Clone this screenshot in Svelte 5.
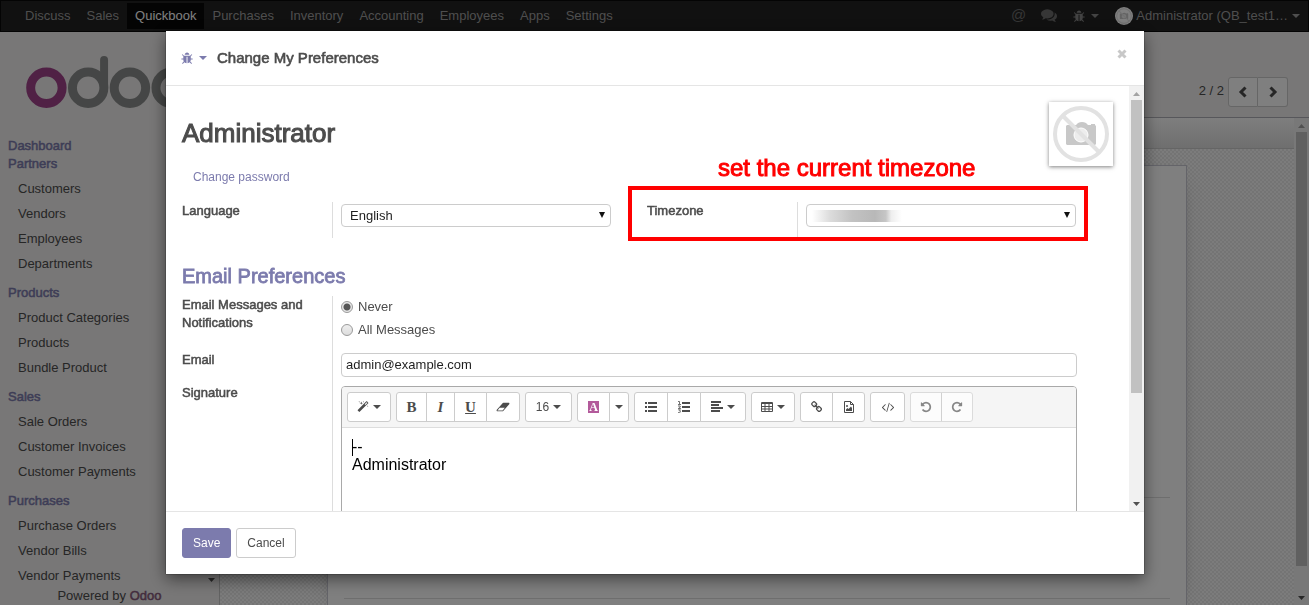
<script>
  const menu = ['Discuss', 'Sales', 'Quickbook', 'Purchases', 'Inventory', 'Accounting', 'Employees', 'Apps', 'Settings'];

  const sections = [
    { title: 'Dashboard', items: [] },
    { title: 'Partners', items: ['Customers', 'Vendors', 'Employees', 'Departments'] },
    { title: 'Products', items: ['Product Categories', 'Products', 'Bundle Product'] },
    { title: 'Sales', items: ['Sale Orders', 'Customer Invoices', 'Customer Payments'] },
    { title: 'Purchases', items: ['Purchase Orders', 'Vendor Bills', 'Vendor Payments'] }
  ];

  const toolbar = [
    [{ name: 'Style', icon: 'magic', caret: true, w: 44 }],
    [
      { name: 'Bold', icon: 'bold', w: 31 },
      { name: 'Italic', icon: 'italic', w: 29 },
      { name: 'Underline', icon: 'underline', w: 33 },
      { name: 'Remove Font Style', icon: 'eraser', w: 34 }
    ],
    [{ name: 'Font Size', icon: 'size', caret: true, w: 47 }],
    [
      { name: 'Recent Color', icon: 'color', w: 33 },
      { name: 'More Color', caret: true, w: 20 }
    ],
    [
      { name: 'Unordered list', icon: 'ul', w: 34 },
      { name: 'Ordered list', icon: 'ol', w: 34 },
      { name: 'Paragraph', icon: 'align', caret: true, w: 46 }
    ],
    [{ name: 'Table', icon: 'table', caret: true, w: 44 }],
    [
      { name: 'Link', icon: 'link', w: 33 },
      { name: 'Picture', icon: 'image', w: 33 }
    ],
    [{ name: 'Code View', icon: 'code', w: 35 }],
    [
      { name: 'Undo', icon: 'undo', w: 32, disabled: true },
      { name: 'Redo', icon: 'redo', w: 32, disabled: true }
    ]
  ];

  let language = $state('English');
  let notify = $state('never');
  let email = $state('admin@example.com');
</script>

{#snippet bug()}
  <svg class="icon" viewBox="0 0 1792 1792" aria-hidden="true"><path d="M1632 960q0 26-19 45t-45 19h-224q0 171-67 290l208 209q19 19 19 45t-19 45q-18 19-45 19t-45-19l-198-197q-5 5-15 13t-42 28.5-65 36.5-82 29-97 13v-896h-128v896q-51 0-101.5-13.5t-87-33-66-39-43.5-32.5l-15-14-183 207q-20 21-48 21-24 0-43-16-19-18-20.5-44.5t15.5-46.5l202-227q-58-114-58-274h-224q-26 0-45-19t-19-45 19-45 45-19h224v-294l-173-173q-19-19-19-45t19-45 45-19 45 19l173 173h844l173-173q19-19 45-19t45 19 19 45-19 45l-173 173v294h224q26 0 45 19t19 45zm-480-576h-640q0-133 93.5-226.5t226.5-93.5 226.5 93.5 93.5 226.5z" /></svg>
{/snippet}

{#snippet nophoto()}
  <svg viewBox="0 0 64 64" aria-hidden="true">
    <path fill="#c8c8c8" d="M17 24l1-1h9l2-2q4-2 8 0l2 2h3v-1h4v1l1 1v18l-1 1H18l-1-1z" />
    <circle cx="32" cy="33" r="7" fill="#ededed" stroke="#fff" />
    <circle cx="32" cy="32" r="26" fill="none" stroke="#e2e2e2" stroke-width="4" />
    <path d="M14 14L50 50" stroke="#e2e2e2" stroke-width="4" />
  </svg>
{/snippet}

{#snippet glyph(name)}
  {#if name === 'magic'}
    <svg class="icon" viewBox="0 0 1792 1792"><path d="M1254 581l293-293-107-107-293 293zm447-293q0 27-18 45l-1286 1286q-18 18-45 18t-45-18l-198-198q-18-18-18-45t18-45l1286-1286q18-18 45-18t45 18l198 198q18 18 18 45zm-1351-190l98 30-98 30-30 98-30-98-98-30 98-30 30-98zm350 162l196 60-196 60-60 196-60-196-196-60 196-60 60-196zm930 478l98 30-98 30-30 98-30-98-98-30 98-30 30-98zm-640-640l98 30-98 30-30 98-30-98-98-30 98-30 30-98z" /></svg>
  {:else if name === 'bold'}
    <b class="letter">B</b>
  {:else if name === 'italic'}
    <i class="letter">I</i>
  {:else if name === 'underline'}
    <u class="letter">U</u>
  {:else if name === 'eraser'}
    <svg class="icon wide" viewBox="0 0 2048 1792"><path d="M960 1408l336-384h-768l-336 384h768zm1013-1077q15 34 9.5 71.5t-30.5 65.5l-896 1024q-38 44-96 44h-768q-38 0-69.5-20.5t-47.5-54.5q-15-34-9.5-71.5t30.5-65.5l896-1024q38-44 96-44h768q38 0 69.5 20.5t47.5 54.5z" /></svg>
  {:else if name === 'size'}
    <span>16</span>
  {:else if name === 'color'}
    <span class="swatch">A</span>
  {:else if name === 'ul'}
    <svg class="icon" viewBox="0 0 12 12"><path d="M0 1h2v2H0zM3 1h9v2H3zM0 5h2v2H0zM3 5h9v2H3zM0 9h2v2H0zM3 9h9v2H3z" /></svg>
  {:else if name === 'ol'}
    <svg class="icon" viewBox="0 0 12 12"><path d="M4 1h8v2H4zM4 5h8v2H4zM4 9h8v2H4z" /><path d="M0 .5h1.5V3M0 3.5h3M0 5h2.2v1.2L.3 7.5h2.6M.2 8.8h2.3L1.5 10q1.3.2.8 1.2-.8.8-2.2.2" fill="none" stroke="currentColor" stroke-width=".8" /></svg>
  {:else if name === 'align'}
    <svg class="icon" viewBox="0 0 12 12"><path d="M0 0h10v2H0zM0 3h8v2H0zM0 6h12v2H0zM0 9h9v2H0z" /></svg>
  {:else if name === 'table'}
    <svg class="icon" viewBox="0 0 12 12"><path fill-rule="evenodd" d="M1 1h10q1 0 1 1v8q0 1-1 1H1q-1 0-1-1V2q0-1 1-1zM1 3v2h2.500V3zM4.500 3v2h3V3zM8.500 3v2H11V3zM1 6v1.500h2.500V6zM4.500 6v1.500h3V6zM8.500 6v1.500H11V6zM1 8.500V10h2.500V8.500zM4.500 8.500V10h3V8.500zM8.500 8.500V10H11V8.500z" /></svg>
  {:else if name === 'link'}
    <svg class="icon" viewBox="0 0 1792 1792"><path d="M1456 1216q0-40-28-68l-208-208q-28-28-68-28-42 0-72 32 3 3 19 18.500t21.500 21.500 15 19 13 25.500 3.500 27.500q0 40-28 68t-68 28q-15 0-27.500-3.500t-25.500-13-19-15-21.500-21.500-18.500-19q-33 31-33 73 0 40 28 68l206 207q27 27 68 27 40 0 68-26l147-146q28-28 28-67zm-703-705q0-40-28-68l-206-207q-28-28-68-28-39 0-68 27l-147 146q-28 28-28 67 0 40 28 68l208 208q27 27 68 27 42 0 72-31-3-3-19-18.500t-21.500-21.500-15-19-13-25.500-3.500-27.500q0-40 28-68t68-28q15 0 27.500 3.500t25.500 13 19 15 21.500 21.500 18.500 19q33-31 33-73zm895 705q0 120-85 203l-147 146q-83 83-203 83-121 0-204-85l-206-207q-83-83-83-203 0-123 88-209l-88-88q-86 88-208 88-120 0-204-84l-208-208q-84-84-84-204t85-203l147-146q83-83 203-83 121 0 204 85l206 207q83 83 83 203 0 123-88 209l88 88q86-88 208-88 120 0 204 84l208 208q84 84 84 204z" /></svg>
  {:else if name === 'image'}
    <svg class="icon" viewBox="0 0 12 12"><path fill="none" stroke="currentColor" d="M1.500.5h6l3 3v8h-9zM7.500.5v3h3" /><path d="M3 10V8.500L4.500 7l1 1L8 5.500 9 7v3z" /><circle cx="4" cy="5" r="1" /></svg>
  {:else if name === 'code'}
    <svg class="icon" viewBox="0 0 1792 1792"><path d="M553 1399l-50 50q-10 10-23 10t-23-10l-466-466q-10-10-10-23t10-23l466-466q10-10 23-10t23 10l50 50q10 10 10 23t-10 23l-393 393 393 393q10 10 10 23t-10 23zm591-1067l-373 1291q-4 13-15.500 19.500t-23.500 2.500l-62-17q-13-4-19.500-15.500t-2.500-24.500l373-1291q4-13 15.500-19.500t23.500-2.500l62 17q13 4 19.500 15.500t2.500 24.500zm657 651l-466 466q-10 10-23 10t-23-10l-50-50q-10-10-10-23t10-23l393-393-393-393q-10-10-10-23t10-23l50-50q10-10 23-10t23 10l466 466q10 10 10 23t-10 23z" /></svg>
  {:else if name === 'undo' || name === 'redo'}
    <svg class="icon" viewBox="0 0 1792 1792"><path transform={name === 'redo' ? 'translate(1792 0) scale(-1 1)' : undefined} d="M1664 896q0 156-61 298t-164 245-245 164-298 61q-172 0-327-72.500t-264-204.500q-7-10-6.500-22.500t8.500-20.500l137-138q10-9 25-9 16 2 23 12 73 95 179 147t225 52q104 0 198.500-40.500t163.500-109.500 109.500-163.500 40.500-198.500-40.500-198.500-109.500-163.500-163.500-109.500-198.500-40.500q-98 0-188 35.500t-160 101.500l137 138q31 30 14 69-17 40-59 40h-448q-26 0-45-19t-19-45v-448q0-42 40-59 39-17 69 14l130 129q107-101 244.500-156.500t284.500-55.500q156 0 298 61t245 164 164 245 61 298z" /></svg>
  {/if}
{/snippet}

<div class="page">
  <nav class="navbar">
    <ul class="menu">
      {#each menu as entry}
        <li><a href="#{entry}" class:active={entry === 'Quickbook'}>{entry}</a></li>
      {/each}
    </ul>
    <div class="systray">
      <button class="tray at" aria-label="Mentions">@</button>
      <button class="tray chat" aria-label="Conversations">
        <svg class="icon" viewBox="0 0 1792 1792"><path d="M1408 768q0 139-94 257t-256.500 186.500-353.500 68.500q-86 0-176-16-124 88-278 128-36 9-86 16h-3q-11 0-20.500-8t-11.500-21q-1-3-1-6.500t.5-6.500 2-6l2.500-5 3.500-5.500 4-5 4.500-5 4-4.500q5-6 23-25t26-29.500 22.500-29 25-38.500 20.500-44q-124-72-195-177t-71-224q0-139 94-257t256.500-186.500 353.500-68.500 353.500 68.500 256.500 186.500 94 257zm384 256q0 120-71 224.500t-195 176.500q10 24 20.500 44t25 38.500 22.500 29 26 29.500 23 25q1 1 4 4.500t4.500 5 4 5 3.500 5.500l2.500 5 2 6 .5 6.500-1 6.500q-3 14-13 22t-22 7q-50-7-86-16-154-40-278-128-90 16-176 16-271 0-472-132 58 4 88 4 161 0 309-45t264-129q125-92 192-212t67-254q0-77-23-152 129 71 204 178t75 230z" /></svg>
      </button>
      <button class="tray debug" aria-label="Developer tools">{@render bug()}<span class="caret"></span></button>
      <button class="tray user">
        <span class="face">{@render nophoto()}</span>
        <span>Administrator (QB_test1…</span>
        <span class="caret"></span>
      </button>
    </div>
  </nav>

  <div class="workspace">
    <aside class="sidebar">
      <div class="brand">
        <svg viewBox="0 0 188 60" fill="none" stroke="#8b8d8c" stroke-width="9" role="img" aria-label="odoo">
          <circle cx="20.5" cy="36" r="15.800" stroke="#a0438a" />
          <circle cx="62.500" cy="36" r="15.800" />
          <path d="M78.500 36V8" stroke-linecap="round" stroke-width="8" />
          <circle cx="104.500" cy="36" r="15.800" />
          <circle cx="146.500" cy="36" r="15.800" />
        </svg>
      </div>
      <div class="tree">
        {#each sections as section}
          <h3>{section.title}</h3>
          {#if section.items.length}
            <ul>
              {#each section.items as item}
                <li><a href="#{item}">{item}</a></li>
              {/each}
            </ul>
          {/if}
        {/each}
      </div>
      <span class="arrow down dark treearrow"></span>
      <footer>Powered by <a href="#odoo">Odoo</a></footer>
    </aside>

    <main>
      <header class="controls">
        <span>2 / 2</span>
        <div class="pager">
          <button aria-label="Previous"><svg viewBox="0 0 10 12"><path d="M7.500 1.500L3 6l4.500 4.500" /></svg></button>
          <button aria-label="Next"><svg viewBox="0 0 10 12"><path d="M2.500 1.500L7 6l-4.500 4.500" /></svg></button>
        </div>
      </header>
      <div class="view">
        <div class="form">
          <div class="statusbar"></div>
          <div class="canvas">
            <div class="sheet"><hr /><hr /></div>
          </div>
        </div>
        <div class="scroll page-scroll">
          <span class="arrow up"></span>
          <span class="thumb"></span>
          <span class="arrow down dark"></span>
        </div>
      </div>
    </main>
  </div>
</div>

<div class="overlay">
  <div class="dialog" role="dialog" aria-modal="true" aria-labelledby="dialog-title">
    <header class="dialog-head">
      <button class="devtools" aria-label="Debug">{@render bug()}<span class="caret"></span></button>
      <h4 id="dialog-title" class="strong">Change My Preferences</h4>
      <button class="close" aria-label="Close"><svg viewBox="0 0 10 10"><path d="M1.500 1.500l7 7M8.500 1.500l-7 7" /></svg></button>
    </header>

    <div class="dialog-body">
      <div class="content">
        <div class="avatar">{@render nophoto()}</div>
        <h1 class="strong">Administrator</h1>
        <button class="password">Change password</button>

        <div class="pair">
          <div class="row">
            <label class="strong" for="lang">Language</label>
            <div class="field">
              <div class="select">
                <select id="lang" bind:value={language}><option>English</option></select>
              </div>
            </div>
          </div>
          <div class="row zone">
            <label class="strong" for="tz">Timezone</label>
            <div class="field">
              <div class="select">
                <select id="tz"><option value=""></option></select>
                <span class="smudge"></span>
              </div>
            </div>
            <p class="note strong">set the current timezone</p>
            <span class="frame"></span>
          </div>
        </div>

        <h2 class="strong">Email Preferences</h2>
        <div class="stack">
          <div class="row messages" role="radiogroup" aria-labelledby="notify-label">
            <span id="notify-label" class="label strong">Email Messages and Notifications</span>
            <div class="field radios">
              <label><input type="radio" name="notify" value="never" bind:group={notify} />Never</label>
              <label><input type="radio" name="notify" value="all" bind:group={notify} />All Messages</label>
            </div>
          </div>
          <div class="row mail">
            <label class="strong" for="email">Email</label>
            <div class="field"><input id="email" type="text" bind:value={email} /></div>
          </div>
          <div class="row signature">
            <span class="label strong">Signature</span>
            <div class="field">
              <div class="editor">
                <div class="toolbar">
                  {#each toolbar as group}
                    <div class="group">
                      {#each group as tool}
                        <button aria-label={tool.name} disabled={tool.disabled} style:width="{tool.w}px">
                          {#if tool.icon}{@render glyph(tool.icon)}{/if}
                          {#if tool.caret}<span class="caret"></span>{/if}
                        </button>
                      {/each}
                    </div>
                  {/each}
                </div>
                <div class="text" role="textbox" aria-label="Signature" tabindex="0">
                  <div><span class="cursor"></span>--</div>
                  <div>Administrator</div>
                </div>
              </div>
            </div>
          </div>
        </div>
      </div>
      <div class="scroll">
        <span class="arrow up"></span>
        <span class="thumb"></span>
        <span class="arrow down dark"></span>
      </div>
    </div>

    <footer class="dialog-foot">
      <button class="primary">Save</button>
      <button>Cancel</button>
    </footer>
  </div>
</div>

<style>
  :global(body) {
    overflow: hidden;
    font: 13px/18px "Liberation Sans", Arial, sans-serif;
    color: #4c4c4c;
  }
  * { box-sizing: border-box; }
  h1, h2, h3, h4, p, ul { margin: 0; padding: 0; font-weight: 400; }
  ul { list-style: none; }
  a { color: inherit; text-decoration: none; }
  button, input, select { font: inherit; color: inherit; margin: 0; }
  button { padding: 0; border: 0; background: none; }
  svg { display: block; }
  .strong { -webkit-text-stroke: 0.04em currentColor; }
  .icon { width: 13px; height: 13px; fill: currentColor; flex: none; }
  .icon.wide { width: 14px; }
  .caret {
    border: 4px solid transparent;
    border-top-color: currentColor;
    border-bottom: 0;
    flex: none;
  }

  .page { height: 100vh; display: flex; flex-direction: column; overflow: hidden; background: #f0eeee; }
  .navbar {
    height: 32px;
    flex: none;
    display: flex;
    align-items: center;
    justify-content: space-between;
    padding: 0 8px 0 16px;
    background: #222;
    border: 1px solid #080808;
    color: #9d9d9d;
  }
  .menu { display: flex; }
  .menu a { display: block; padding: 4px 8px; }
  .menu .active { background: #080808; color: #fff; }
  .systray { display: flex; align-items: center; }
  .tray { display: flex; align-items: center; height: 26px; }
  .at { font-size: 15px; padding: 0 15px 2px 0; color: #6c6c6c; }
  .chat { padding: 0 16px 2px 0; color: #6c6c6c; }
  .chat .icon { width: 16px; height: 16px; }
  .debug { gap: 5px; padding-right: 16px; color: #868686; }
  .user { gap: 3px; }
  .user .caret { margin-left: 1px; }
  .face { width: 18px; height: 18px; border-radius: 50%; background: #fff; overflow: hidden; }

  .workspace { flex: 1; min-height: 0; display: flex; }
  .sidebar {
    position: relative;
    width: 220px;
    flex: none;
    display: flex;
    flex-direction: column;
    border-right: 1px solid #c4c4c4;
  }
  .brand { flex: none; padding: 20px 6px 25px 26px; }
  .tree { flex: 1; min-height: 0; overflow: hidden; padding-left: 8px; }
  h3 { font-size: 13px; line-height: 18px; color: #7c7bad; -webkit-text-stroke: 0.04em #7c7bad; }
  .tree ul { padding: 3px 0 8px 10px; }
  .tree li { line-height: 25px; }
  .treearrow { position: absolute; right: 4px; bottom: 23px; }
  .sidebar footer { flex: none; text-align: center; }
  .sidebar footer a { color: #875a7b; -webkit-text-stroke: 0.04em #875a7b; }

  main { flex: 1; min-width: 0; display: flex; flex-direction: column; }
  .controls {
    height: 86px;
    flex: none;
    display: flex;
    justify-content: flex-end;
    align-items: flex-end;
    gap: 4px;
    padding: 0 21px 10px 0;
    border-bottom: 1px solid #afafb6;
  }
  .controls span { padding-bottom: 7px; }
  .pager { display: flex; }
  .pager button {
    width: 30px;
    height: 30px;
    display: grid;
    place-items: center;
    background: #fff;
    border: 1px solid #ccc;
    border-radius: 3px 0 0 3px;
  }
  .pager button + button { border-radius: 0 3px 3px 0; border-left: 0; }
  .pager svg { width: 10px; height: 12px; fill: none; stroke: #4c4c4c; stroke-width: 3; }
  .view { flex: 1; min-height: 0; display: flex; }
  .form { flex: 1; min-width: 0; display: flex; flex-direction: column; }
  .statusbar { height: 31px; flex: none; background: linear-gradient(#fcfcfc, #dedede); border-bottom: 1px solid #cacaca; }
  .canvas {
    flex: 1;
    min-height: 0;
    overflow: hidden;
    padding: 16px 107px 0;
    background: repeating-conic-gradient(#e8e8e8 0 25%, #f8f8f8 0 50%) 0 0 / 4px 4px;
  }
  .sheet {
    height: 100%;
    padding: 331px 16px 0;
    background: #fff;
    border: 1px solid #c8c8d3;
    border-bottom: 0;
    box-shadow: 0 5px 20px -15px #000;
  }
  hr { margin: 0; border: 0; border-top: 1px solid #ddd; }
  hr + hr { margin-top: 100px; }

  .scroll {
    width: 15px;
    flex: none;
    display: flex;
    flex-direction: column;
    align-items: center;
    padding: 6px 0 5px;
    background: #f1f1f1;
  }
  .thumb { width: 11px; height: 293px; margin: 4px 0 auto; background: #c1c1c1; }
  .page-scroll .thumb { height: 434px; }
  .arrow { width: 7px; height: 4px; background: #a3a3a3; flex: none; }
  .arrow.dark { background: #505050; }
  .up { clip-path: polygon(50% 0, 100% 100%, 0 100%); }
  .down { clip-path: polygon(0 0, 100% 0, 50% 100%); }

  .overlay {
    position: fixed;
    inset: 0;
    padding: 31px 165px 31px 166px;
    background: rgba(0, 0, 0, 0.5);
  }
  .dialog {
    height: 100%;
    display: flex;
    flex-direction: column;
    background: #fff;
    box-shadow: 0 5px 15px rgba(0, 0, 0, 0.5), 0 0 1px #000;
  }
  .dialog-head {
    flex: none;
    height: 55px;
    display: flex;
    align-items: center;
    padding: 0 16px 0 15px;
    border-bottom: 1px solid #e5e5e5;
  }
  .devtools { display: flex; align-items: center; gap: 5px; color: #7c7bad; }
  h4 { font-size: 15px; line-height: 20px; margin-left: 10px; }
  .close { margin: 0 1px 8px auto; }
  .close svg { width: 10px; height: 10px; stroke: #c8c8c8; stroke-width: 3; }

  .dialog-body { flex: 1; min-height: 0; display: flex; }
  .content { position: relative; flex: 1; min-width: 0; overflow: hidden; padding: 16px; }
  .avatar {
    position: absolute;
    top: 16px;
    right: 16px;
    width: 64px;
    height: 64px;
    box-shadow: 0 1px 4px rgba(0, 0, 0, 0.5);
  }
  h1 { font-size: 26px; line-height: 34px; padding-top: 14px; }
  .password { display: block; height: 30px; margin: 12px 0 10px; padding: 0 11px; font-size: 12px; color: #7c7bad; }
  .pair { display: grid; grid-template-columns: 1fr 1fr; gap: 36px; padding-right: 37px; }
  .stack { padding-right: 36px; }
  .row { position: relative; display: grid; grid-template-columns: 150px 1fr; }
  .pair .row { min-height: 36px; }
  .row > label, .label { padding-right: 16px; }
  .field { border-left: 1px solid #ddd; padding: 2px 0 0 8px; min-width: 0; }
  .select { position: relative; }
  .select::after {
    content: "";
    position: absolute;
    right: 6px;
    top: 8px;
    border: 3px solid transparent;
    border-top: 6px solid #111;
    border-bottom: 0;
  }
  select {
    display: block;
    width: 100%;
    height: 23px;
    padding: 0 8px;
    appearance: none;
    background: #fff;
    border: 1px solid #ccc;
    border-radius: 4px;
    color: #1f1f1f;
  }
  .smudge {
    position: absolute;
    left: 6px;
    top: 6px;
    width: 90px;
    height: 12px;
    background: linear-gradient(90deg, #fff, #dcdcdc 20%, #c2c2c2 45%, #b8b8b8 70%, #c6c6c6 82%, #eee 88%, #fff);
  }
  .note {
    position: absolute;
    left: 71px;
    top: -48px;
    font-size: 24px;
    line-height: 28px;
    color: #f00;
    white-space: nowrap;
  }
  .frame { position: absolute; inset: -16px -12px -3px -19px; border: 4px solid #f00; pointer-events: none; }

  h2 { font-size: 20px; line-height: 24px; margin: 26px 0 8px; color: #7c7bad; }
  .messages { min-height: 55px; }
  .mail { min-height: 33px; }
  .field.radios { padding-top: 0; }
  .radios label { display: flex; align-items: center; gap: 5px; height: 23px; padding-bottom: 1px; }
  input[type="radio"] {
    appearance: none;
    width: 12px;
    height: 12px;
    border: 1px solid #9a9a9a;
    border-radius: 50%;
    background: linear-gradient(#eee, #ddd);
  }
  input[type="radio"]:checked { background: radial-gradient(circle, #555 0 3px, #e6e6e6 4px); }
  input[type="text"] {
    display: block;
    width: 100%;
    height: 24px;
    padding: 0 4px 2px;
    border: 1px solid #ccc;
    border-radius: 4px;
    color: #1f1f1f;
  }
  .editor { border: 1px solid #a9a9a9; border-radius: 4px; overflow: hidden; min-height: 220px; }
  .toolbar { display: flex; flex-wrap: wrap; gap: 5px; padding: 5px; background: #f5f5f5; border-bottom: 1px solid #ddd; }
  .group { display: flex; }
  .group button {
    display: flex;
    align-items: center;
    justify-content: center;
    gap: 4px;
    height: 30px;
    font-size: 12px;
    background: #fff;
    border: 1px solid #ccc;
  }
  .group button + button { margin-left: -1px; }
  .group button:first-child { border-top-left-radius: 3px; border-bottom-left-radius: 3px; }
  .group button:last-child { border-top-right-radius: 3px; border-bottom-right-radius: 3px; }
  .group button:disabled { opacity: 0.65; }
  .group .icon { height: 12px; width: 12px; }
  .group .icon.wide { width: 14px; }
  .letter { font-family: "Liberation Serif", serif; font-size: 15px; font-weight: 700; }
  .swatch {
    width: 11px;
    background: #b35a9b;
    color: #fff;
    font: 700 12px/12px "Liberation Serif", serif;
    text-align: center;
  }
  .text { padding: 10px; font-size: 16px; line-height: 18px; color: #000; }
  .cursor { display: inline-block; width: 1px; height: 17px; margin-right: -1px; background: #000; vertical-align: middle; }

  .dialog-foot { flex: none; display: flex; gap: 5px; padding: 16px; border-top: 1px solid #e5e5e5; }
  .dialog-foot button { height: 30px; padding: 0 10px; font-size: 12px; border: 1px solid #ccc; border-radius: 3px; background: #fff; }
  .dialog-foot .primary { color: #fff; background: #7c7bad; border-color: #7c7bad; }
</style>
